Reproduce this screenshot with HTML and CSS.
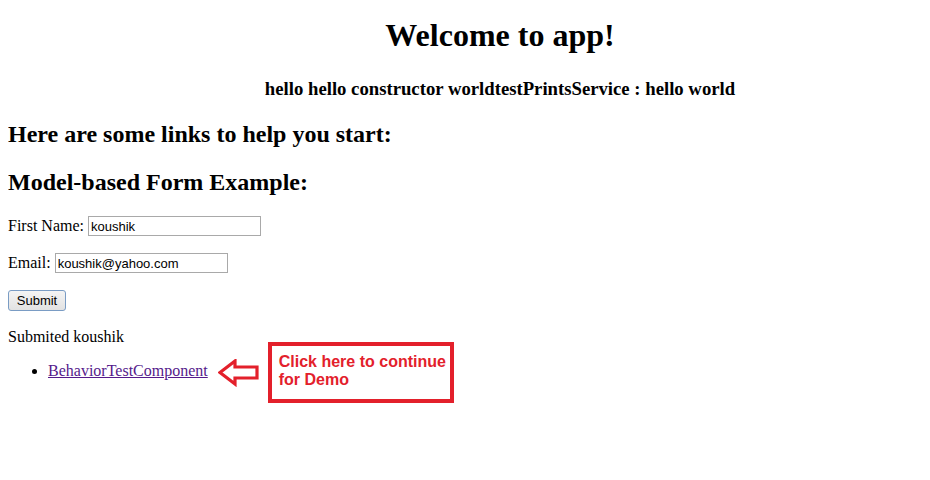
FILE: index.html
```html
<!DOCTYPE html>
<html>
<head>
<meta charset="utf-8">
<link rel="stylesheet" href="styles.css">
</head>
<body>
<div class="header">
  <h1 class="title">Welcome to app!</h1>
  <h3 class="sub">hello hello constructor worldtestPrintsService : hello world</h3>
</div>
<h2 class="sec">Here are some links to help you start:</h2>
<h2 class="sec">Model-based Form Example:</h2>
<form class="form">
  <p class="row">First Name: <input class="field" type="text" value="koushik"></p>
  <p class="row">Email: <input class="field" type="text" value="koushik@yahoo.com"></p>
  <button class="btn" type="button">Submit</button>
</form>
<p class="submitted">Submited koushik</p>
<ul class="links">
  <li class="item"><a class="link" href="#">BehaviorTestComponent</a><span class="note"><svg class="arrow" width="42" height="28" viewBox="0 0 42 28"><path d="M2 13.5 L17 2 L17 8 L39 8 L39 19 L17 19 L17 25 Z" fill="none" stroke="#e3202b" stroke-width="3.2" stroke-linejoin="miter"/></svg><span class="callout">Click here to continue<br>for Demo</span></span></li>
</ul>
</body>
</html>
```
FILE: styles.css
```css
body {
  margin: 8px;
  font-family: "Liberation Serif", "Times New Roman", serif;
  font-size: 16px;
  color: #000;
  background: #fff;
}
.header {
  padding-left: 70px;
  text-align: center;
}
.title {
  font-size: 32px;
  margin: 9px 0 0;
  line-height: 37px;
}
.sub {
  font-size: 18.72px;
  margin: 24px 0 0;
  line-height: 22px;
}
.sec {
  font-size: 24px;
  line-height: 28px;
  margin: 20px 0 0;
}
.form { margin-top: 20px; }
.row { margin: 0 0 17px; line-height: 20px; }
.field {
  font-family: "Liberation Sans", Arial, sans-serif;
  font-size: 13px;
  width: 173px;
  height: 20px;
  box-sizing: border-box;
  border: 1px solid #a9a9a9;
  padding: 1px 2px;
  margin: 0;
  vertical-align: top;
}
.btn {
  font-family: "Liberation Sans", Arial, sans-serif;
  font-size: 13px;
  height: 21px;
  width: 58px;
  padding: 0;
  border: 1px solid #7a9cc4;
  border-radius: 3px;
  background: linear-gradient(#f4f4f4, #e2e2e2);
  color: #000;
}
.submitted { margin: 16px 0 0; line-height: 20px; }
.links { margin: -5px 0 0; padding-left: 40px; }
.item { line-height: 20px; }
.link { color: #551a8b; text-decoration: underline; }
.note {
  display: inline-flex;
  align-items: center;
  vertical-align: middle;
  margin-left: 10px;
  gap: 8px;
}
.arrow { display: block; }
.callout {
  display: block;
  border: 4px solid #e3202b;
  width: 186px;
  height: 61px;
  box-sizing: border-box;
  padding: 7px 0 0 7px;
  font-family: "Liberation Sans", Arial, sans-serif;
  font-weight: bold;
  font-size: 16px;
  line-height: 18px;
  color: #e3202b;
}
```
